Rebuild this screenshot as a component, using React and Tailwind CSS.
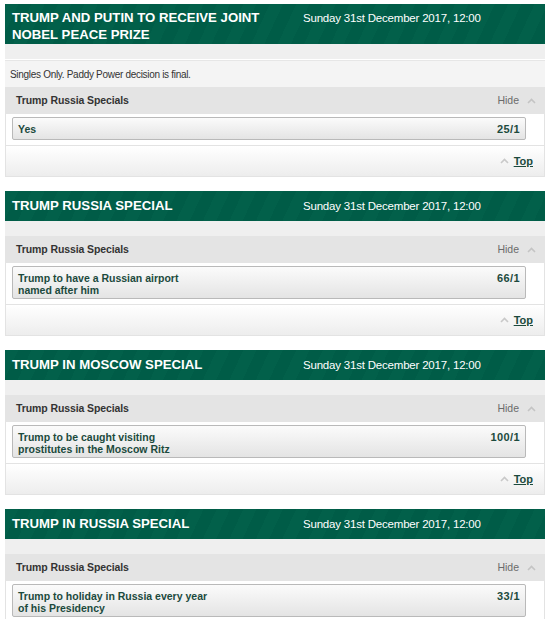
import React from "react";

const sections = [
    {
        title: ["TRUMP AND PUTIN TO RECEIVE JOINT", "NOBEL PEACE PRIZE"],
        note: "Singles Only. Paddy Power decision is final.",
        pick: ["Yes"],
        odds: "25/1",
    },
    {
        title: ["TRUMP RUSSIA SPECIAL"],
        pick: ["Trump to have a Russian airport", "named after him"],
        odds: "66/1",
    },
    {
        title: ["TRUMP IN MOSCOW SPECIAL"],
        pick: ["Trump to be caught visiting", "prostitutes in the Moscow Ritz"],
        odds: "100/1",
    },
    {
        title: ["TRUMP IN RUSSIA SPECIAL"],
        pick: ["Trump to holiday in Russia every year", "of his Presidency"],
        odds: "33/1",
    },
];

const Chevron = ({ className }) => (
    <svg width="9" height="6" viewBox="0 0 9 6" className={className}>
        <path d="M1 5 L4.5 1.5 L8 5" fill="none" stroke="currentColor" strokeWidth="1.6" />
    </svg>
);

const Market = ({ s }) => {
    const twoLine = s.title.length > 1;
    return (
        <div className="mb-[14px]">
            {/* green header */}
            <div
                className={`flex items-start text-white bg-[repeating-linear-gradient(115deg,#02604a_0px,#02604a_12px,#005c47_12px,#005c47_24px)] ${twoLine ? "h-[40px] pt-[5px]" : "h-[30px] pt-[6px]"}`}
            >
                <div className="w-[298px] pl-[7px] text-[13.2px] font-bold leading-[17px]">
                    {s.title.map((t) => (
                        <div key={t}>{t}</div>
                    ))}
                </div>
                <div className="text-[11.5px] leading-[17px] pt-[1px] tracking-[-0.2px]">Sunday 31st December 2017, 12:00</div>
            </div>

            <div className="h-[15px] bg-[#efefef]" />

            {s.note && (
                <div className="h-[27px] mt-[1px] bg-[#f4f4f4] border-t border-[#e6e6e6] pl-[5px] flex items-center text-[10px] text-[#333] tracking-[-0.3px]">
                    {s.note}
                </div>
            )}

            <div className="h-[27px] bg-[#e4e4e4] flex items-center justify-between pl-[11px] pr-[9px]">
                <span className="text-[10.5px] font-bold text-[#333] tracking-[-0.1px]">Trump Russia Specials</span>
                <span className="flex items-center gap-[8px] text-[10.5px] text-[#6b6b6b]">
                    Hide
                    <Chevron className="text-[#c4c4c4]" />
                </span>
            </div>

            <div className="bg-white border-x border-[#e3e3e3] pl-[6px] pr-[18px] pt-[3px] pb-[5px]">
                <div
                    className={`flex justify-between rounded-[2px] border border-[#b9b9b9] bg-gradient-to-b from-[#fbfbfb] to-[#e4e4e4] pl-[5px] pr-[5px] text-[10.5px] font-bold leading-[12px] text-[#1c4a3d] ${s.pick.length > 1 ? "h-[33px] pt-[5px]" : "h-[23px] items-center"}`}
                >
                    <div>
                        {s.pick.map((p) => (
                            <div key={p}>{p}</div>
                        ))}
                    </div>
                    <div className="text-[11px] tracking-[0.4px]">{s.odds}</div>
                </div>
            </div>

            <div className="h-[32px] border border-[#e3e3e3] bg-gradient-to-b from-[#ffffff] to-[#ededed] flex items-end justify-end pr-[11px] pb-[7px]">
                <span className="flex items-center gap-[5px]">
                    <Chevron className="text-[#c9c9c9]" />
                    <a href="#" className="text-[11px] font-bold text-[#1c4a3d] underline">Top</a>
                </span>
            </div>
        </div>
    );
};

const App = () => {
    return (
        <div className="w-[549px] bg-white pt-[4px] pl-[5px] pr-[4px] font-['Liberation_Sans',Arial,sans-serif]">
            {sections.map((s) => (
                <Market key={s.odds} s={s} />
            ))}
        </div>
    );
};

export default App;
